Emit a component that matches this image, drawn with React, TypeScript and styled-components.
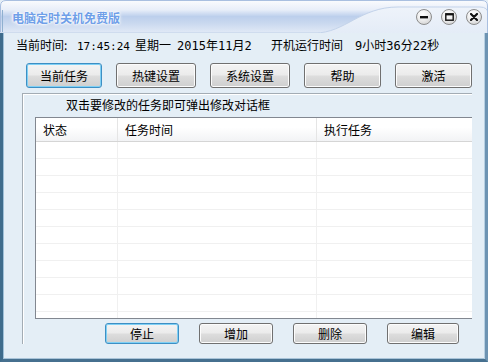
import React from "react";
import styled, { createGlobalStyle } from "styled-components";

const Global = createGlobalStyle`
  html, body { margin: 0; padding: 0; background: #e4eef6; }
  body { font-family: "Liberation Sans", "Noto Sans CJK SC", sans-serif; font-size: 12px; color: #000; }
  * { box-sizing: border-box; }
`;

const Window = styled.div`
  width: 488px;
  height: 362px;
  display: flex;
  flex-direction: column;
  background: #e4eef6;
  overflow: hidden;
`;

const TitleBar = styled.div`
  position: relative;
  height: 33px;
  flex: none;
  display: flex;
  align-items: center;
  padding-left: 12px;
`;

const TitleBg = styled.svg`
  position: absolute;
  left: 0;
  top: 0;
  width: 488px;
  height: 33px;
`;

const TitleText = styled.span`
  position: relative;
  font-family: "Noto Sans CJK SC", sans-serif;
  font-size: 12px;
  font-weight: 700;
  line-height: 14px;
  margin-top: 2px;
  color: #6f9fe8;
  text-shadow: 0 0 1px #ffffff, 0 0 2px #ffffff, 0 0 3px #ffffff, 0 0 4px #ffffff;
`;

const Controls = styled.div`
  position: relative;
  margin-left: auto;
  margin-right: 6px;
  display: flex;
  gap: 9px;
`;

const Circle = styled.div`
  width: 16px;
  height: 16px;
  border-radius: 50%;
  border: 1px solid #8c8c8c;
  background: radial-gradient(circle at 40% 30%, #ffffff 0%, #eeeeee 45%, #c8c8c8 100%);
  display: flex;
  align-items: center;
  justify-content: center;
`;

const Body = styled.div`
  flex: 1;
  display: flex;
  flex-direction: column;
  border-left: 3px solid #3f6c8c;
  border-right: 3px solid #6d93b2;
  border-bottom: 3px solid #46708f;
  box-shadow: inset 1px 0 0 #9fc0d8, inset -1px 0 0 #b8d0e2, inset 0 -1px 0 #a9c4d9;
`;

const StatusLine = styled.div`
  margin-top: 5px;
  padding-left: 13px;
  height: 14px;
  line-height: 14px;
  display: flex;
  font-family: "Noto Sans CJK SC", sans-serif;
  font-size: 12px;
  white-space: pre;
`;

const Seg = styled.span<{ $w?: number }>`
  ${(p) => (p.$w ? `width: ${p.$w}px;` : "")}
  flex: none;
`;

const Num = styled.span<{ $size?: number }>`
  font-family: "DejaVu Sans Mono", monospace;
  font-size: ${(p) => p.$size ?? 12}px;
`;

const TopRow = styled.div`
  margin-top: 11px;
  padding-left: 23px;
  display: flex;
  gap: 14px;
`;

const Button = styled.button<{ $w: number; $h: number; $focus?: boolean }>`
  width: ${(p) => p.$w}px;
  height: ${(p) => p.$h}px;
  padding: 0;
  margin: 0;
  font-family: "Noto Sans CJK SC", sans-serif;
  font-size: 12px;
  color: #000;
  border-radius: 3px;
  border: 1px solid ${(p) => (p.$focus ? "#3d8fc4" : "#707070")};
  background: linear-gradient(#f4f4f4 0%, #ebebeb 48%, #dddddd 52%, #cfcfcf 100%);
  box-shadow: ${(p) => (p.$focus ? "inset 0 0 0 1px #7fd0f5" : "inset 0 0 0 1px #fcfcfc")};
  display: flex;
  align-items: center;
  justify-content: center;
  line-height: 14px;
`;

const Group = styled.div`
  margin-top: 5px;
  margin-left: 19px;
  width: 450px;
  height: 251px;
  border-top: 1px solid #a3acb4;
  border-left: 1px solid #a3acb4;
  box-shadow: inset 1px 1px 0 #ffffff;
  display: flex;
  flex-direction: column;
`;

const Caption = styled.div`
  margin-top: 4px;
  padding-left: 43px;
  height: 14px;
  line-height: 14px;
  font-family: "Noto Sans CJK SC", sans-serif;
  font-size: 12px;
`;

const Table = styled.div`
  margin-top: 5px;
  margin-left: 12px;
  width: 437px;
  height: 203px;
  background: #ffffff;
  border: 1px solid #828790;
  border-right: none;
  display: flex;
  flex-direction: column;
  overflow: hidden;
`;

const HeaderRow = styled.div`
  display: flex;
  height: 24px;
  flex: none;
  background: linear-gradient(#ffffff 0%, #ffffff 40%, #f2f3f5 100%);
  border-bottom: 1px solid #d5d5d5;
`;

const HeaderCell = styled.div<{ $w?: number }>`
  ${(p) => (p.$w ? `width: ${p.$w}px; flex: none;` : "flex: 1;")}
  padding-left: 7px;
  display: flex;
  align-items: center;
  font-family: "Noto Sans CJK SC", sans-serif;
  font-size: 12px;
  border-right: 1px solid #e5e5e5;
  &:last-child { border-right: none; }
`;

const Row = styled.div`
  display: flex;
  height: 17px;
  flex: none;
  border-bottom: 1px solid #f0f0f0;
`;

const Cell = styled.div<{ $w?: number }>`
  ${(p) => (p.$w ? `width: ${p.$w}px; flex: none;` : "flex: 1;")}
  border-right: 1px solid #f0f0f0;
  &:last-child { border-right: none; }
`;

const BottomRow = styled.div`
  margin-top: 4px;
  padding-left: 82px;
  display: flex;
  gap: 20px;
`;

const topButtons = [
  { label: "当前任务", w: 76, focus: true },
  { label: "热键设置", w: 80 },
  { label: "系统设置", w: 80 },
  { label: "帮助", w: 77 },
  { label: "激活", w: 77 },
];

const bottomButtons = [
  { label: "停止", w: 74, focus: true },
  { label: "增加", w: 74 },
  { label: "删除", w: 74 },
  { label: "编辑", w: 72 },
];

const cols = [82, 199];

export default function App() {
  return (
    <>
      <Global />
      <Window>
        <TitleBar>
          <TitleBg viewBox="0 0 488 33">
            <defs>
              <linearGradient id="tb" x1="0" y1="0" x2="0" y2="1">
                <stop offset="0" stopColor="#fbfcfe" />
                <stop offset="0.3" stopColor="#e8eef9" />
                <stop offset="0.5" stopColor="#bccfec" />
                <stop offset="0.7" stopColor="#c9d8ef" />
                <stop offset="1" stopColor="#e2eaf6" />
              </linearGradient>
              <linearGradient id="tr" x1="0" y1="0" x2="0" y2="1">
                <stop offset="0" stopColor="#eef3fa" />
                <stop offset="1" stopColor="#e4ecf7" />
              </linearGradient>
            </defs>
            <path d="M0 33 L0 6 Q0 0 6 0 L482 0 Q488 0 488 6 L488 33 Z" fill="url(#tb)" />
            <path d="M315 33 C345 33 360 7 398 7 L480 7 Q488 7 488 14 L488 33 Z" fill="url(#tr)" />
            <path d="M315 33 C345 33 360 7 398 7 L480 7 Q488 7 488 14" fill="none" stroke="#c3d3ea" strokeWidth="1" />
            <path d="M0.5 33 L0.5 6 Q0.5 0.5 6 0.5 L482 0.5 Q487.5 0.5 487.5 6 L487.5 33" fill="none" stroke="#a9bfe0" strokeWidth="1" />
            <line x1="2.5" y1="10" x2="2.5" y2="33" stroke="#8fb0d0" strokeWidth="1" />
            <line x1="0" y1="32.5" x2="318" y2="32.5" stroke="#cfdcee" strokeWidth="1" />
          </TitleBg>
          <TitleText>电脑定时关机免费版</TitleText>
          <Controls>
            <Circle>
              <svg width="8" height="8" viewBox="0 0 8 8">
                <rect x="0" y="3" width="8" height="2.4" fill="#111" />
              </svg>
            </Circle>
            <Circle>
              <svg width="9" height="8" viewBox="0 0 9 8">
                <rect x="0.8" y="0.8" width="7.4" height="6.4" fill="none" stroke="#111" strokeWidth="1.4" />
                <rect x="0.8" y="0.8" width="7.4" height="1.6" fill="#111" />
              </svg>
            </Circle>
            <Circle>
              <svg width="8" height="8" viewBox="0 0 8 8">
                <path d="M1 1 L7 7 M7 1 L1 7" stroke="#111" strokeWidth="2.2" strokeLinecap="round" />
              </svg>
            </Circle>
          </Controls>
        </TitleBar>
        <Body>
          <StatusLine>
            <Seg $w={61}>当前时间:</Seg>
            <Seg $w={58}><Num $size={11}>17:45:24</Num></Seg>
            <Seg $w={42}>星期一</Seg>
            <Seg $w={94}><Num>2015</Num>年<Num>11</Num>月<Num>2</Num></Seg>
            <Seg $w={84}>开机运行时间</Seg>
            <Seg><Num>9</Num>小时<Num>36</Num>分<Num>22</Num>秒</Seg>
          </StatusLine>
          <TopRow>
            {topButtons.map((b) => (
              <Button key={b.label} $w={b.w} $h={25} $focus={b.focus}>
                {b.label}
              </Button>
            ))}
          </TopRow>
          <Group>
            <Caption>双击要修改的任务即可弹出修改对话框</Caption>
            <Table>
              <HeaderRow>
                <HeaderCell $w={cols[0]}>状态</HeaderCell>
                <HeaderCell $w={cols[1]}>任务时间</HeaderCell>
                <HeaderCell>执行任务</HeaderCell>
              </HeaderRow>
              {Array.from({ length: 11 }).map((_, i) => (
                <Row key={i}>
                  <Cell $w={cols[0]} />
                  <Cell $w={cols[1]} />
                  <Cell />
                </Row>
              ))}
            </Table>
            <BottomRow>
              {bottomButtons.map((b) => (
                <Button key={b.label} $w={b.w} $h={21} $focus={b.focus}>
                  {b.label}
                </Button>
              ))}
            </BottomRow>
          </Group>
        </Body>
      </Window>
    </>
  );
}
